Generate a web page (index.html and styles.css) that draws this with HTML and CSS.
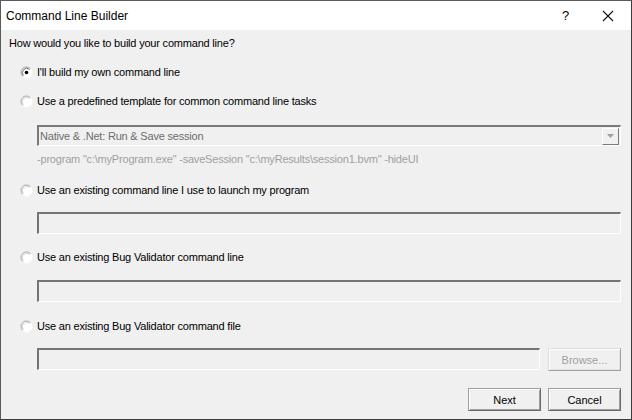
FILE: index.html
```html
<!DOCTYPE html>
<html>
<head>
<meta charset="utf-8">
<link rel="stylesheet" href="styles.css">
</head>
<body>
<div class="window">
  <div class="titlebar">
    <span class="title">Command Line Builder</span>
    <span class="help">?</span>
    <span class="close"><svg width="12" height="12" viewBox="0 0 12 12"><path d="M1 1L11 11M11 1L1 11" stroke="#111" stroke-width="1.1" fill="none"/></svg></span>
  </div>
  <div class="content">
    <div class="question">How would you like to build your command line?</div>

    <div class="radio-row r1">
      <svg class="radio" width="13" height="13" viewBox="0 0 13 13"><circle cx="6.5" cy="6.5" r="5.5" fill="#fff" stroke="#fff"/><path d="M2.6 10.4A5.5 5.5 0 0 1 10.4 2.6" stroke="#a0a0a0" stroke-width="1" fill="none"/><path d="M3.4 9.6A4.4 4.4 0 0 1 9.6 3.4" stroke="#696969" stroke-width="1" fill="none"/><circle cx="6.5" cy="6.5" r="1.8" fill="#000"/></svg>
      <span>I'll build my own command line</span>
    </div>

    <div class="radio-row r2">
      <svg class="radio" width="13" height="13" viewBox="0 0 13 13"><circle cx="6.5" cy="6.5" r="5.5" fill="#fff" stroke="#fff"/><path d="M2.6 10.4A5.5 5.5 0 0 1 10.4 2.6" stroke="#a0a0a0" stroke-width="1" fill="none"/><path d="M3.4 9.6A4.4 4.4 0 0 1 9.6 3.4" stroke="#d0d0d0" stroke-width="1" fill="none"/></svg>
      <span>Use a predefined template for common command line tasks</span>
    </div>

    <div class="combo">
      <span class="combo-text">Native &amp; .Net: Run &amp; Save session</span>
      <span class="combo-btn"><svg width="7" height="4" viewBox="0 0 7 4"><path d="M0 0H7L3.5 4Z" fill="#a0a0a0"/></svg></span>
    </div>

    <div class="hint">-program "c:\myProgram.exe" -saveSession "c:\myResults\session1.bvm" -hideUI</div>

    <div class="radio-row r3">
      <svg class="radio" width="13" height="13" viewBox="0 0 13 13"><circle cx="6.5" cy="6.5" r="5.5" fill="#fff" stroke="#fff"/><path d="M2.6 10.4A5.5 5.5 0 0 1 10.4 2.6" stroke="#a0a0a0" stroke-width="1" fill="none"/><path d="M3.4 9.6A4.4 4.4 0 0 1 9.6 3.4" stroke="#d0d0d0" stroke-width="1" fill="none"/></svg>
      <span>Use an existing command line I use to launch my program</span>
    </div>
    <div class="edit e3"></div>

    <div class="radio-row r4">
      <svg class="radio" width="13" height="13" viewBox="0 0 13 13"><circle cx="6.5" cy="6.5" r="5.5" fill="#fff" stroke="#fff"/><path d="M2.6 10.4A5.5 5.5 0 0 1 10.4 2.6" stroke="#a0a0a0" stroke-width="1" fill="none"/><path d="M3.4 9.6A4.4 4.4 0 0 1 9.6 3.4" stroke="#d0d0d0" stroke-width="1" fill="none"/></svg>
      <span>Use an existing Bug Validator command line</span>
    </div>
    <div class="edit e4"></div>

    <div class="radio-row r5">
      <svg class="radio" width="13" height="13" viewBox="0 0 13 13"><circle cx="6.5" cy="6.5" r="5.5" fill="#fff" stroke="#fff"/><path d="M2.6 10.4A5.5 5.5 0 0 1 10.4 2.6" stroke="#a0a0a0" stroke-width="1" fill="none"/><path d="M3.4 9.6A4.4 4.4 0 0 1 9.6 3.4" stroke="#d0d0d0" stroke-width="1" fill="none"/></svg>
      <span>Use an existing Bug Validator command file</span>
    </div>
    <div class="file-row">
      <div class="edit e5"></div>
      <div class="btn disabled">Browse...</div>
    </div>

    <div class="buttons">
      <div class="btn">Next</div>
      <div class="btn">Cancel</div>
    </div>
  </div>
</div>
</body>
</html>
```

FILE: styles.css
```css
html, body {
  margin: 0;
  padding: 0;
  background: #f0f0f0;
}
.window {
  width: 632px;
  height: 420px;
  box-sizing: border-box;
  border: 1px solid #5a5a5a;
  border-right-color: #3c3c3c;
  border-bottom-color: #3c3c3c;
  background: #f0f0f0;
  font-family: "Liberation Sans", Arial, sans-serif;
  font-size: 11px;
  letter-spacing: -0.2px;
  color: #000;
  overflow: hidden;
}
.titlebar {
  height: 29px;
  background: #fff;
  display: flex;
  align-items: center;
}
.title {
  font-family: "Liberation Sans", Arial, sans-serif;
  font-size: 12px;
  letter-spacing: 0;
  margin-left: 5px;
  flex: 1;
  color: #000;
}
.help {
  font-family: "Liberation Sans", Arial, sans-serif;
  font-size: 13px;
  letter-spacing: 0;
  width: 14px;
  margin-right: 26px;
}
.close {
  display: flex;
  margin-right: 17px;
}
.content {
  padding: 0 10px 0 0;
}
.question {
  margin: 6px 0 0 8px;
  height: 14px;
  line-height: 14px;
}
.radio-row {
  display: flex;
  align-items: center;
  height: 14px;
  line-height: 14px;
  margin-left: 19px;
}
.radio {
  margin-right: 4px;
  flex: none;
}
.r1 { margin-top: 15px; }
.r2 { margin-top: 15px; }
.r3 { margin-top: 17px; }
.r4 { margin-top: 16px; }
.r5 { margin-top: 17px; }
.combo {
  margin: 17px 0 0 36px;
  height: 21px;
  box-sizing: border-box;
  border-style: solid;
  border-width: 2px 1px 1px 2px;
  border-color: #7a7a7a #ffffff #ffffff #7a7a7a;
  display: flex;
  align-items: center;
  background: #f0f0f0;
}
.combo-text {
  flex: 1;
  color: #6d6d6d;
  padding-left: 1px;
}
.combo-btn {
  width: 17px;
  height: 17px;
  box-sizing: border-box;
  border: 1px solid #fff;
  border-right-color: #7a7a7a;
  border-bottom-color: #7a7a7a;
  display: flex;
  align-items: center;
  justify-content: center;
  margin-right: 1px;
}
.hint {
  margin: 6px 0 0 36px;
  height: 14px;
  line-height: 14px;
  color: #a0a0a0;
}
.edit {
  height: 22px;
  box-sizing: border-box;
  border-style: solid;
  border-width: 2px 1px 1px 2px;
  border-color: #747474 #ffffff #ffffff #747474;
  background: #f0f0f0;
  margin-left: 36px;
}
.e3 { margin-top: 15px; }
.e4 { margin-top: 16px; }
.file-row {
  display: flex;
  margin: 15px 0 0 36px;
  gap: 8px;
}
.e5 {
  flex: 1;
  margin: 0;
}
.btn {
  width: 73px;
  height: 23px;
  box-sizing: border-box;
  border: 1px solid #696969;
  border-top-color: #a0a0a0;
  border-left-color: #a0a0a0;
  box-shadow: inset 1px 1px 0 #fff, inset -1px -1px 0 #a0a0a0;
  display: flex;
  align-items: center;
  justify-content: center;
  background: #f0f0f0;
  color: #000;
  letter-spacing: 0;
}
.btn.disabled {
  color: #a0a0a0;
  border-color: #dcdcdc #a0a0a0 #a0a0a0 #dcdcdc;
  box-shadow: inset 1px 1px 0 #fff, inset -1px -1px 0 #e3e3e3;
}
.buttons {
  display: flex;
  justify-content: flex-end;
  gap: 7px;
  margin-top: 17px;
}
```
